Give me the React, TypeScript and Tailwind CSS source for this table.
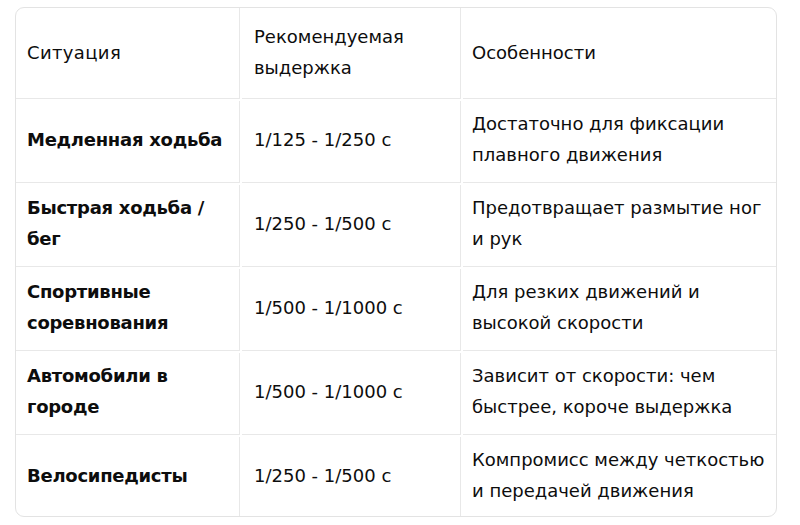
const rows = [
  { s: ["Медленная ходьба"], v: "1/125 - 1/250 с", f: ["Достаточно для фиксации", "плавного движения"] },
  { s: ["Быстрая ходьба /", "бег"], v: "1/250 - 1/500 с", f: ["Предотвращает размытие ног", "и рук"] },
  { s: ["Спортивные", "соревнования"], v: "1/500 - 1/1000 с", f: ["Для резких движений и", "высокой скорости"] },
  { s: ["Автомобили в", "городе"], v: "1/500 - 1/1000 с", f: ["Зависит от скорости: чем", "быстрее, короче выдержка"] },
  { s: ["Велосипедисты"], v: "1/250 - 1/500 с", f: ["Компромисс между четкостью", "и передачей движения"] },
];

const Lines = ({ lines }: { lines: string[] }) => (
  <div>
    {lines.map((l, i) => (
      <div key={i} className="whitespace-nowrap">{l}</div>
    ))}
  </div>
);

const App = () => {
  return (
    <div className="w-[800px] h-[525px] bg-white pt-[7px] pl-[15px] font-['DejaVu_Sans',sans-serif] text-[18px] leading-[31px] text-[#0d0d0d]">
      <div className="w-[762px] h-[510px] rounded-[9px] border border-[#e3e3e3] overflow-hidden">
        <div className="grid grid-cols-[224px_219px_minmax(0,1fr)] grid-rows-[91px_82px_82px_82px_82px_81px] gap-[2px]">
          <div className="flex items-center pl-[11px] pb-[2px] tracking-[0.02em] border-r border-b border-[#e8e8e8]">Ситуация</div>
          <div className="flex items-center pl-[12px] pb-[2px] border-r border-b border-[#e8e8e8]">
            <Lines lines={["Рекомендуемая", "выдержка"]} />
          </div>
          <div className="flex items-center pl-[9px] pb-[2px] border-b border-[#e8e8e8]">Особенности</div>
          {rows.map((r, i) => {
            const last = i === rows.length - 1;
            return [
              <div key={`s${i}`} className={`flex items-center pl-[11px] pb-[5px] font-bold tracking-[-0.015em] border-r border-[#e8e8e8] ${last ? "" : "border-b"}`}>
                <Lines lines={r.s} />
              </div>,
              <div key={`v${i}`} className={`flex items-center pl-[12px] pb-[5px] border-r border-[#e8e8e8] ${last ? "" : "border-b"}`}>{r.v}</div>,
              <div key={`f${i}`} className={`flex items-center pl-[9px] pb-[5px] border-[#e8e8e8] ${last ? "" : "border-b"}`}>
                <Lines lines={r.f} />
              </div>,
            ];
          })}
        </div>
      </div>
    </div>
  );
};

export default App;
